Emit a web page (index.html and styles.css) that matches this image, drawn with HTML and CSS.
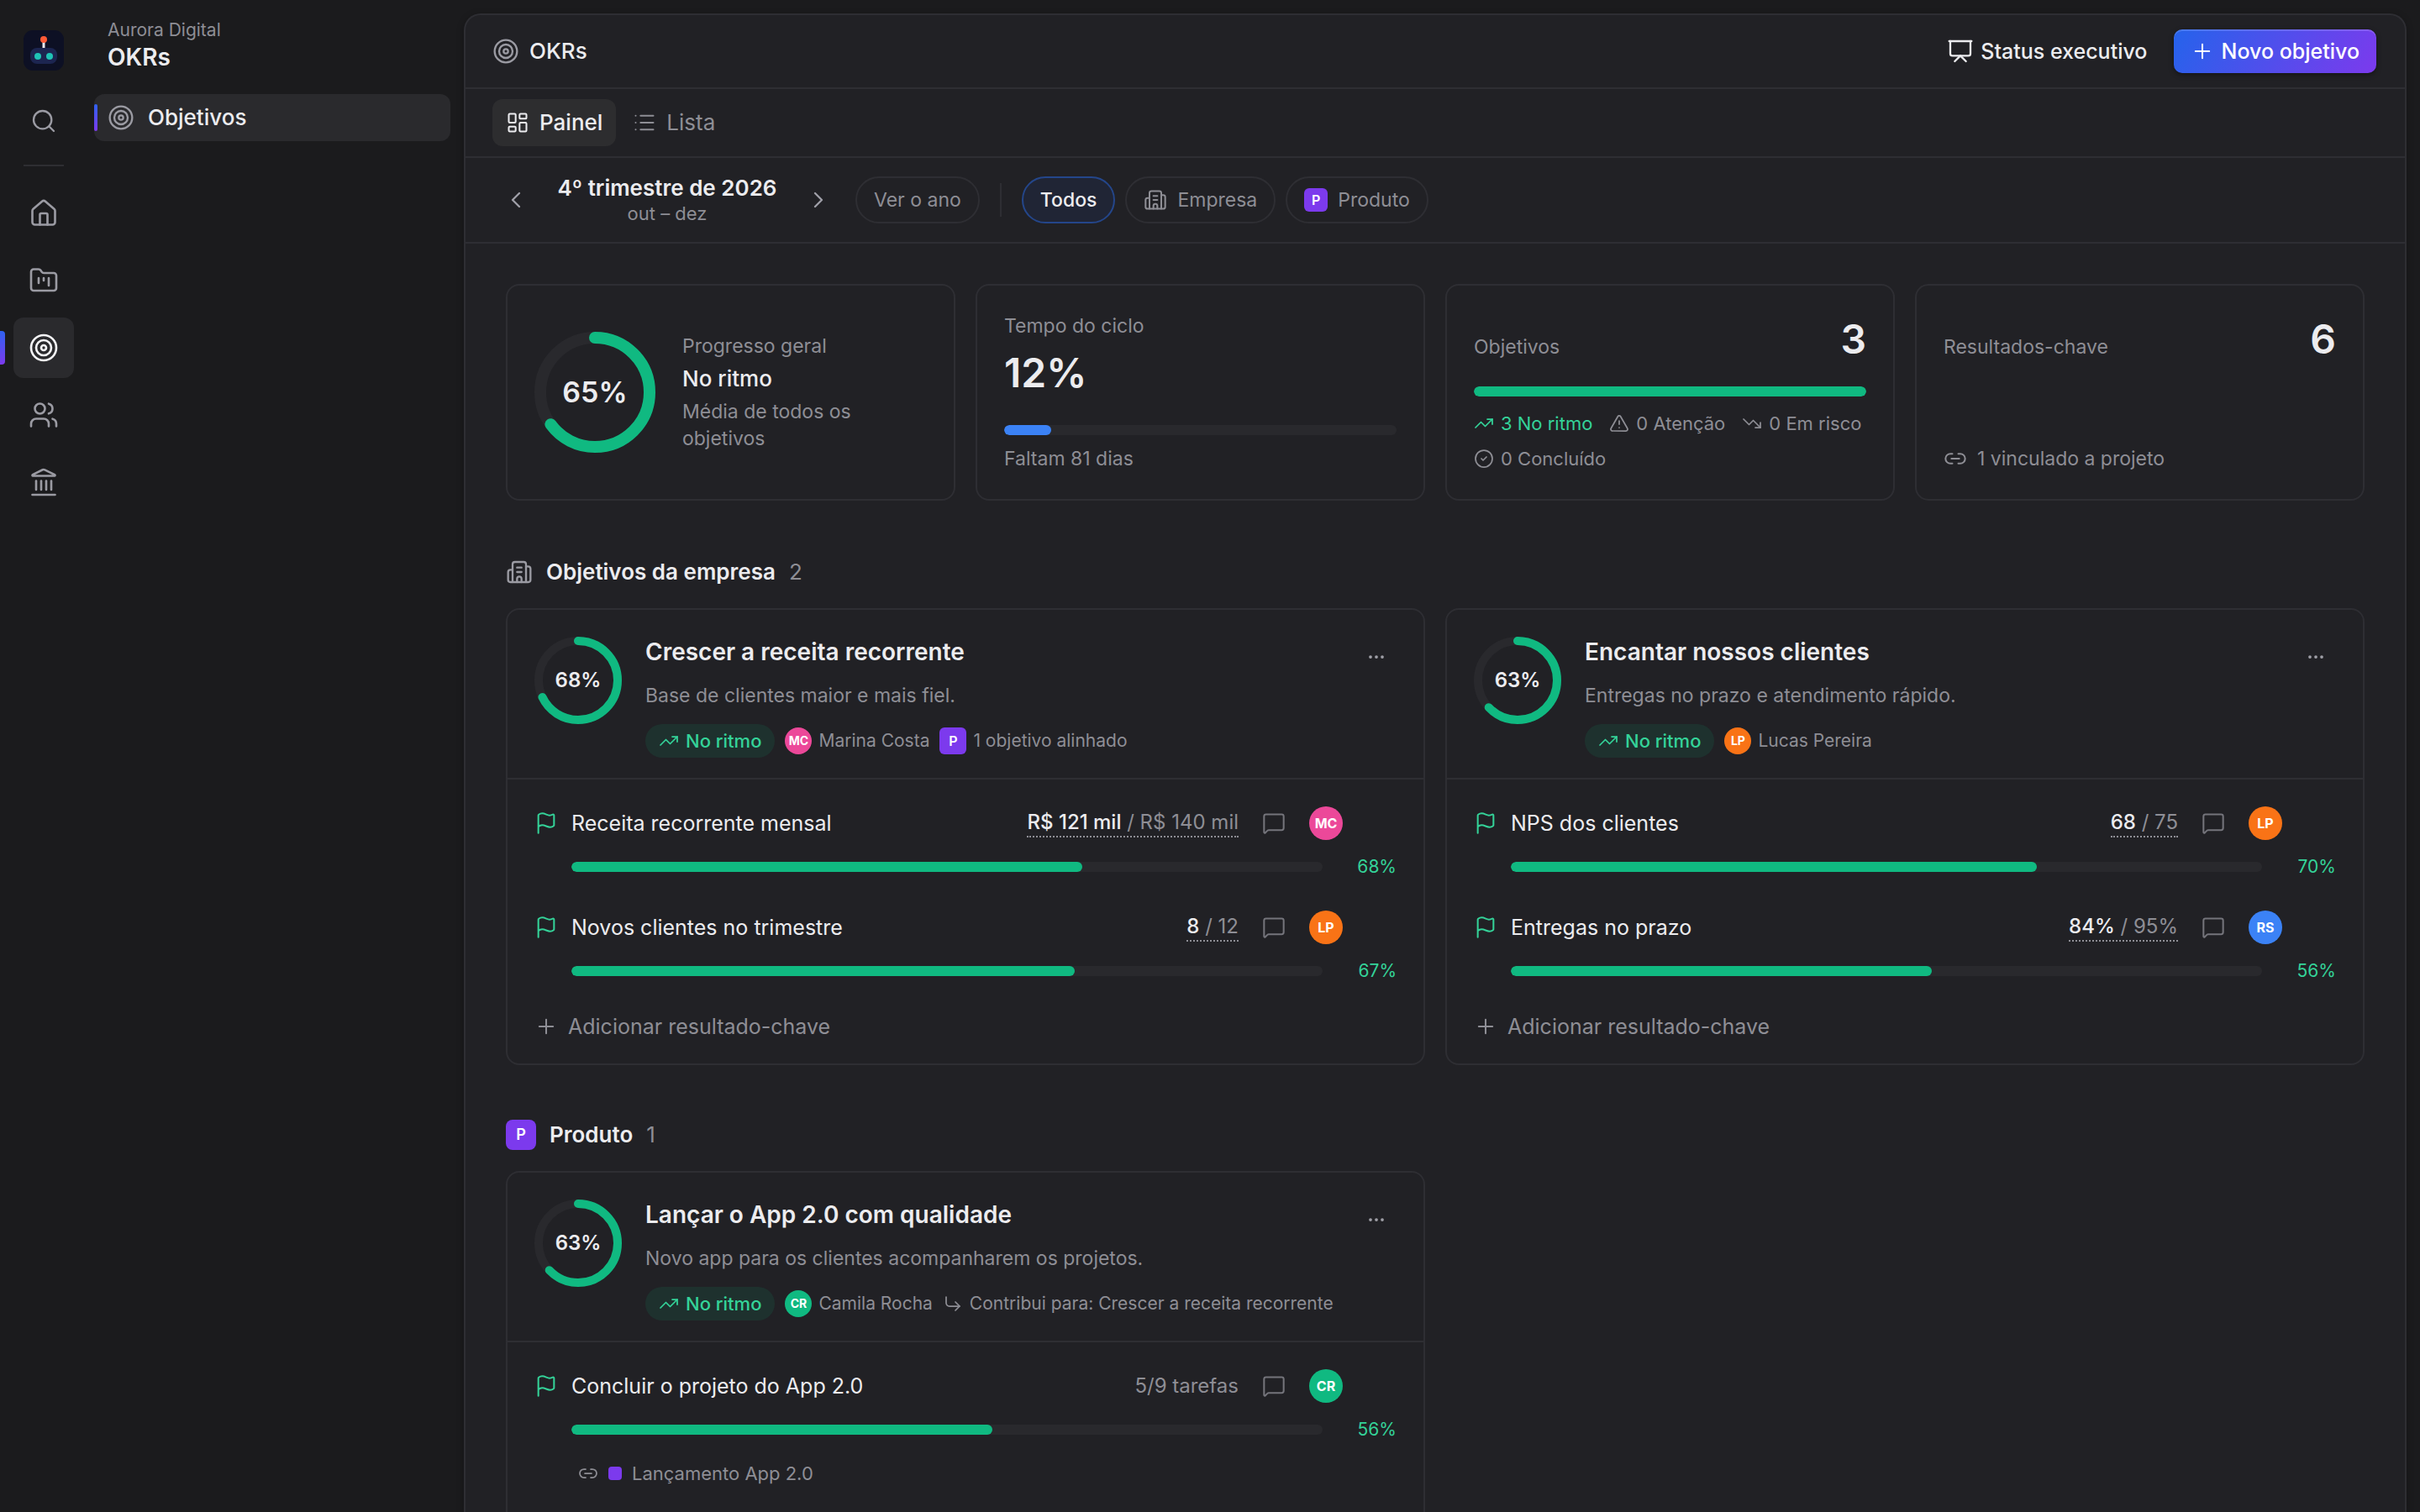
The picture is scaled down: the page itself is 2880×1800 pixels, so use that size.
FILE: index.html
```html
<!DOCTYPE html>
<html lang="pt-BR">
<head>
    <meta charset="utf-8">
    <title>OKRs</title>
    <link rel="stylesheet" href="styles.css">
</head>
<body>
    <svg class="sprite" aria-hidden="true">
        <symbol id="search" viewBox="0 0 24 24"><circle cx="11" cy="11" r="8"/><path d="m21 21-4.3-4.3"/></symbol>
        <symbol id="home" viewBox="0 0 24 24"><path d="M15 21v-8a1 1 0 0 0-1-1h-4a1 1 0 0 0-1 1v8"/><path d="M3 10a2 2 0 0 1 .709-1.528l7-5.999a2 2 0 0 1 2.582 0l7 5.999A2 2 0 0 1 21 10v9a2 2 0 0 1-2 2H5a2 2 0 0 1-2-2z"/></symbol>
        <symbol id="folder" viewBox="0 0 24 24"><path d="M4 20h16a2 2 0 0 0 2-2V8a2 2 0 0 0-2-2h-7.93a2 2 0 0 1-1.66-.9l-.82-1.2A2 2 0 0 0 7.93 3H4a2 2 0 0 0-2 2v13c0 1.1.9 2 2 2Z"/><path d="M8 10v4"/><path d="M12 10v2"/><path d="M16 10v6"/></symbol>
        <symbol id="goal" viewBox="0 0 24 24"><circle cx="12" cy="12" r="10"/><circle cx="12" cy="12" r="6"/><circle cx="12" cy="12" r="2"/></symbol>
        <symbol id="users" viewBox="0 0 24 24"><path d="M16 21v-2a4 4 0 0 0-4-4H6a4 4 0 0 0-4 4v2"/><circle cx="9" cy="7" r="4"/><path d="M22 21v-2a4 4 0 0 0-3-3.87"/><path d="M16 3.128a4 4 0 0 1 0 7.744"/></symbol>
        <symbol id="landmark" viewBox="0 0 24 24"><path d="M10 18v-7"/><path d="M11.12 2.198a2 2 0 0 1 1.76.006l7.866 3.847c.476.233.31.949-.22.949H3.474c-.53 0-.695-.716-.22-.949z"/><path d="M14 18v-7"/><path d="M18 18v-7"/><path d="M3 22h18"/><path d="M6 18v-7"/></symbol>
        <symbol id="building" viewBox="0 0 24 24"><path d="M10 12h4"/><path d="M10 8h4"/><path d="M14 21v-3a2 2 0 0 0-4 0v3"/><path d="M6 10H4a2 2 0 0 0-2 2v7a2 2 0 0 0 2 2h16a2 2 0 0 0 2-2V9a2 2 0 0 0-2-2h-2"/><path d="M6 21V5a2 2 0 0 1 2-2h8a2 2 0 0 1 2 2v16"/></symbol>
        <symbol id="presentation" viewBox="0 0 24 24"><path d="M2 3h20"/><path d="M21 3v11a2 2 0 0 1-2 2H5a2 2 0 0 1-2-2V3"/><path d="m7 21 5-5 5 5"/></symbol>
        <symbol id="plus" viewBox="0 0 24 24"><path d="M5 12h14"/><path d="M12 5v14"/></symbol>
        <symbol id="dashboard" viewBox="0 0 24 24"><rect width="7" height="9" x="3" y="3" rx="1"/><rect width="7" height="5" x="14" y="3" rx="1"/><rect width="7" height="9" x="14" y="12" rx="1"/><rect width="7" height="5" x="3" y="16" rx="1"/></symbol>
        <symbol id="list" viewBox="0 0 24 24"><path d="M3 5h.01"/><path d="M3 12h.01"/><path d="M3 19h.01"/><path d="M8 5h13"/><path d="M8 12h13"/><path d="M8 19h13"/></symbol>
        <symbol id="chevron-left" viewBox="0 0 24 24"><path d="m15 18-6-6 6-6"/></symbol>
        <symbol id="chevron-right" viewBox="0 0 24 24"><path d="m9 18 6-6-6-6"/></symbol>
        <symbol id="up" viewBox="0 0 24 24"><path d="M16 7h6v6"/><path d="m22 7-8.5 8.5-5-5L2 17"/></symbol>
        <symbol id="down" viewBox="0 0 24 24"><path d="M16 17h6v-6"/><path d="m22 17-8.5-8.5-5 5L2 7"/></symbol>
        <symbol id="alert" viewBox="0 0 24 24"><path d="m21.73 18-8-14a2 2 0 0 0-3.48 0l-8 14A2 2 0 0 0 4 21h16a2 2 0 0 0 1.73-3"/><path d="M12 9v4"/><path d="M12 17h.01"/></symbol>
        <symbol id="check" viewBox="0 0 24 24"><circle cx="12" cy="12" r="10"/><path d="m9 12 2 2 4-4"/></symbol>
        <symbol id="link" viewBox="0 0 24 24"><path d="M9 17H7A5 5 0 0 1 7 7h2"/><path d="M15 7h2a5 5 0 1 1 0 10h-2"/><path d="M8 12h8"/></symbol>
        <symbol id="flag" viewBox="0 0 24 24"><path d="M4 22V4a1 1 0 0 1 .4-.8A6 6 0 0 1 8 2c3 0 5 2 7.333 2q2 0 3.067-.8A1 1 0 0 1 20 4v10a1 1 0 0 1-.4.8A6 6 0 0 1 16 16c-3 0-5-2-8-2a6 6 0 0 0-4 1.528"/></symbol>
        <symbol id="message" viewBox="0 0 24 24"><path d="M22 17a2 2 0 0 1-2 2H6.828a2 2 0 0 0-1.414.586l-2.202 2.202A.71.71 0 0 1 2 21.286V5a2 2 0 0 1 2-2h16a2 2 0 0 1 2 2z"/></symbol>
        <symbol id="dots" viewBox="0 0 24 24"><circle cx="12" cy="12" r="1"/><circle cx="19" cy="12" r="1"/><circle cx="5" cy="12" r="1"/></symbol>
        <symbol id="corner" viewBox="0 0 24 24"><path d="m15 10 5 5-5 5"/><path d="M4 4v7a4 4 0 0 0 4 4h12"/></symbol>
    </svg>

    <div class="app">
        <nav class="rail" aria-label="Principal">
            <svg class="logo" viewBox="0 0 48 48">
                <rect width="48" height="48" rx="11" fill="#0d1024"/>
                <rect x="22.5" y="12" width="3" height="10" fill="#e8e8ee"/>
                <circle cx="24" cy="11" r="4" fill="#ff5a36"/>
                <rect x="8" y="21" width="32" height="19" rx="8" fill="#1c2550"/>
                <circle cx="17" cy="31" r="4" fill="#1fc2b5"/>
                <circle cx="31" cy="31" r="4" fill="#1fc2b5"/>
            </svg>
            <button class="rail-item rail-search" aria-label="Buscar"><svg class="icon icon-lg"><use href="#search"/></svg></button>
            <div class="rail-line"></div>
            <a class="rail-item" href="#" aria-label="Início"><svg class="icon icon-xl"><use href="#home"/></svg></a>
            <a class="rail-item" href="#" aria-label="Projetos"><svg class="icon icon-xl"><use href="#folder"/></svg></a>
            <a class="rail-item active" href="#" aria-label="OKRs"><svg class="icon icon-xl"><use href="#goal"/></svg></a>
            <a class="rail-item" href="#" aria-label="Pessoas"><svg class="icon icon-xl"><use href="#users"/></svg></a>
            <a class="rail-item" href="#" aria-label="Governança"><svg class="icon icon-xl"><use href="#landmark"/></svg></a>
        </nav>

        <aside class="sidebar">
            <div class="sidebar-head">
                <div class="company">Aurora Digital</div>
                <div class="module">OKRs</div>
            </div>
            <a class="sidebar-link" href="#"><svg class="icon icon-lg"><use href="#goal"/></svg>Objetivos</a>
        </aside>

        <main class="panel">
            <header class="topbar">
                <svg class="icon icon-lg"><use href="#goal"/></svg>
                <h1>OKRs</h1>
                <button class="btn btn-ghost"><svg class="icon icon-lg"><use href="#presentation"/></svg>Status executivo</button>
                <button class="btn btn-primary"><svg class="icon"><use href="#plus"/></svg>Novo objetivo</button>
            </header>

            <div class="tabs">
                <button class="tab active"><svg class="icon"><use href="#dashboard"/></svg>Painel</button>
                <button class="tab"><svg class="icon"><use href="#list"/></svg>Lista</button>
            </div>

            <div class="filters">
                <button class="step" aria-label="Trimestre anterior"><svg class="icon icon-lg"><use href="#chevron-left"/></svg></button>
                <div class="period">
                    <div class="period-name">4º trimestre de 2026</div>
                    <div class="period-months">out – dez</div>
                </div>
                <button class="step" aria-label="Próximo trimestre"><svg class="icon icon-lg"><use href="#chevron-right"/></svg></button>
                <button class="pill pill-year">Ver o ano</button>
                <div class="filters-line"></div>
                <div class="pills">
                    <button class="pill active">Todos</button>
                    <button class="pill"><svg class="icon"><use href="#building"/></svg>Empresa</button>
                    <button class="pill"><span class="badge badge-sm">P</span>Produto</button>
                </div>
            </div>

            <div class="content">
                <div class="kpis">
                    <div class="card kpi kpi-ring">
                        <div class="ring ring-lg">
                            <svg viewBox="0 0 144 144">
                                <circle class="ring-track" cx="72" cy="72" r="65"/>
                                <circle class="ring-fill" cx="72" cy="72" r="65" pathLength="100" stroke-dasharray="65 100"/>
                            </svg>
                            <span>65%</span>
                        </div>
                        <div class="kpi-text">
                            <div class="label">Progresso geral</div>
                            <div class="status">No ritmo</div>
                            <div class="label">Média de todos os objetivos</div>
                        </div>
                    </div>
                    <div class="card kpi">
                        <div class="label">Tempo do ciclo</div>
                        <div class="big">12%</div>
                        <div class="bar bottom"><div class="bar-fill blue" style="width: 12%"></div></div>
                        <div class="label under">Faltam 81 dias</div>
                    </div>
                    <div class="card kpi">
                        <div class="kpi-head"><span class="label">Objetivos</span><span class="big">3</span></div>
                        <div class="bar top"><div class="bar-fill" style="width: 100%"></div></div>
                        <div class="legend">
                            <span class="legend-item green"><svg class="icon icon-sm"><use href="#up"/></svg>3 No ritmo</span>
                            <span class="legend-item"><svg class="icon icon-sm"><use href="#alert"/></svg>0 Atenção</span>
                            <span class="legend-item"><svg class="icon icon-sm"><use href="#down"/></svg>0 Em risco</span>
                            <span class="legend-item"><svg class="icon icon-sm"><use href="#check"/></svg>0 Concluído</span>
                        </div>
                    </div>
                    <div class="card kpi">
                        <div class="kpi-head"><span class="label">Resultados-chave</span><span class="big">6</span></div>
                        <div class="linked bottom"><svg class="icon"><use href="#link"/></svg>1 vinculado a projeto</div>
                    </div>
                </div>

                <section class="group">
                    <div class="group-head">
                        <svg class="icon icon-lg"><use href="#building"/></svg>
                        <h2>Objetivos da empresa</h2>
                        <span class="count">2</span>
                    </div>
                    <div class="objectives">
                        <article class="card objective">
                            <div class="objective-head">
                                <div class="ring">
                                    <svg viewBox="0 0 104 104">
                                        <circle class="ring-track" cx="52" cy="52" r="47"/>
                                        <circle class="ring-fill" cx="52" cy="52" r="47" pathLength="100" stroke-dasharray="68 100"/>
                                    </svg>
                                    <span>68%</span>
                                </div>
                                <div class="objective-text">
                                    <h3>Crescer a receita recorrente</h3>
                                    <p>Base de clientes maior e mais fiel.</p>
                                    <div class="meta">
                                        <span class="chip"><svg class="icon icon-sm"><use href="#up"/></svg>No ritmo</span>
                                        <span class="meta-item"><span class="avatar avatar-sm pink">MC</span>Marina Costa</span>
                                        <span class="meta-item"><span class="badge">P</span>1 objetivo alinhado</span>
                                    </div>
                                </div>
                                <button class="more" aria-label="Mais opções"><svg class="icon icon-sm"><use href="#dots"/></svg></button>
                            </div>
                            <div class="results">
                                <div class="result">
                                    <svg class="icon green"><use href="#flag"/></svg>
                                    <div class="result-name">Receita recorrente mensal</div>
                                    <button class="value"><b>R$ 121 mil</b> / R$ 140 mil</button>
                                    <button class="comment" aria-label="Comentários"><svg class="icon"><use href="#message"/></svg></button>
                                    <span class="avatar pink">MC</span>
                                    <div class="result-progress">
                                        <div class="bar"><div class="bar-fill" style="width: 68%"></div></div>
                                        <span class="percent">68%</span>
                                    </div>
                                </div>
                                <div class="result">
                                    <svg class="icon green"><use href="#flag"/></svg>
                                    <div class="result-name">Novos clientes no trimestre</div>
                                    <button class="value"><b>8</b> / 12</button>
                                    <button class="comment" aria-label="Comentários"><svg class="icon"><use href="#message"/></svg></button>
                                    <span class="avatar orange">LP</span>
                                    <div class="result-progress">
                                        <div class="bar"><div class="bar-fill" style="width: 67%"></div></div>
                                        <span class="percent">67%</span>
                                    </div>
                                </div>
                            </div>
                            <button class="add"><svg class="icon"><use href="#plus"/></svg>Adicionar resultado-chave</button>
                        </article>

                        <article class="card objective">
                            <div class="objective-head">
                                <div class="ring">
                                    <svg viewBox="0 0 104 104">
                                        <circle class="ring-track" cx="52" cy="52" r="47"/>
                                        <circle class="ring-fill" cx="52" cy="52" r="47" pathLength="100" stroke-dasharray="63 100"/>
                                    </svg>
                                    <span>63%</span>
                                </div>
                                <div class="objective-text">
                                    <h3>Encantar nossos clientes</h3>
                                    <p>Entregas no prazo e atendimento rápido.</p>
                                    <div class="meta">
                                        <span class="chip"><svg class="icon icon-sm"><use href="#up"/></svg>No ritmo</span>
                                        <span class="meta-item"><span class="avatar avatar-sm orange">LP</span>Lucas Pereira</span>
                                    </div>
                                </div>
                                <button class="more" aria-label="Mais opções"><svg class="icon icon-sm"><use href="#dots"/></svg></button>
                            </div>
                            <div class="results">
                                <div class="result">
                                    <svg class="icon green"><use href="#flag"/></svg>
                                    <div class="result-name">NPS dos clientes</div>
                                    <button class="value"><b>68</b> / 75</button>
                                    <button class="comment" aria-label="Comentários"><svg class="icon"><use href="#message"/></svg></button>
                                    <span class="avatar orange">LP</span>
                                    <div class="result-progress">
                                        <div class="bar"><div class="bar-fill" style="width: 70%"></div></div>
                                        <span class="percent">70%</span>
                                    </div>
                                </div>
                                <div class="result">
                                    <svg class="icon green"><use href="#flag"/></svg>
                                    <div class="result-name">Entregas no prazo</div>
                                    <button class="value"><b>84%</b> / 95%</button>
                                    <button class="comment" aria-label="Comentários"><svg class="icon"><use href="#message"/></svg></button>
                                    <span class="avatar blue">RS</span>
                                    <div class="result-progress">
                                        <div class="bar"><div class="bar-fill" style="width: 56%"></div></div>
                                        <span class="percent">56%</span>
                                    </div>
                                </div>
                            </div>
                            <button class="add"><svg class="icon"><use href="#plus"/></svg>Adicionar resultado-chave</button>
                        </article>
                    </div>
                </section>

                <section class="group">
                    <div class="group-head">
                        <span class="badge badge-lg">P</span>
                        <h2>Produto</h2>
                        <span class="count">1</span>
                    </div>
                    <div class="objectives">
                        <article class="card objective">
                            <div class="objective-head">
                                <div class="ring">
                                    <svg viewBox="0 0 104 104">
                                        <circle class="ring-track" cx="52" cy="52" r="47"/>
                                        <circle class="ring-fill" cx="52" cy="52" r="47" pathLength="100" stroke-dasharray="63 100"/>
                                    </svg>
                                    <span>63%</span>
                                </div>
                                <div class="objective-text">
                                    <h3>Lançar o App 2.0 com qualidade</h3>
                                    <p>Novo app para os clientes acompanharem os projetos.</p>
                                    <div class="meta">
                                        <span class="chip"><svg class="icon icon-sm"><use href="#up"/></svg>No ritmo</span>
                                        <span class="meta-item"><span class="avatar avatar-sm teal">CR</span>Camila Rocha</span>
                                        <span class="meta-item"><svg class="icon icon-sm"><use href="#corner"/></svg>Contribui para: Crescer a receita recorrente</span>
                                    </div>
                                </div>
                                <button class="more" aria-label="Mais opções"><svg class="icon icon-sm"><use href="#dots"/></svg></button>
                            </div>
                            <div class="results">
                                <div class="result">
                                    <svg class="icon green"><use href="#flag"/></svg>
                                    <div class="result-name">Concluir o projeto do App 2.0</div>
                                    <span class="tasks">5/9 tarefas</span>
                                    <button class="comment" aria-label="Comentários"><svg class="icon"><use href="#message"/></svg></button>
                                    <span class="avatar teal">CR</span>
                                    <div class="result-progress">
                                        <div class="bar"><div class="bar-fill" style="width: 56%"></div></div>
                                        <span class="percent">56%</span>
                                    </div>
                                    <a class="project" href="#"><svg class="icon icon-sm"><use href="#link"/></svg><span class="swatch"></span>Lançamento App 2.0</a>
                                </div>
                            </div>
                            <button class="add"><svg class="icon"><use href="#plus"/></svg></button>
                        </article>
                    </div>
                </section>
            </div>
        </main>
    </div>
</body>
</html>
```
FILE: styles.css
```css
* {
    box-sizing: border-box;
}

body {
    margin: 0;
    background-color: #1b1b1d;
    color: #ececef;
    font-family: Inter, "Noto Sans", sans-serif;
    font-size: 23px;
    line-height: 32px;
}

h1, h2, h3, p {
    margin: 0;
}

button {
    padding: 0;
    border: none;
    background: none;
    color: inherit;
    font: inherit;
    cursor: pointer;
}

a {
    color: inherit;
    text-decoration: none;
}

.sprite {
    display: none;
}

.icon {
    flex: none;
    width: 28px;
    height: 28px;
    fill: none;
    stroke: currentColor;
    stroke-width: 1.75;
    stroke-linecap: round;
    stroke-linejoin: round;
}

.icon-sm {
    width: 24px;
    height: 24px;
}

.icon-lg {
    width: 32px;
    height: 32px;
}

.icon-xl {
    width: 36px;
    height: 36px;
}

.icon.green, .green {
    color: #34d399;
}

.app {
    display: flex;
    height: 100vh;
    overflow: hidden;
}

/* left rail */

.rail {
    display: flex;
    flex-direction: column;
    align-items: center;
    gap: 8px;
    width: 104px;
    padding-top: 36px;
}

.logo {
    width: 48px;
    height: 48px;
}

.rail-item {
    position: relative;
    display: flex;
    align-items: center;
    justify-content: center;
    width: 72px;
    height: 72px;
    border-radius: 12px;
    color: #9b9ba3;
}

.rail-search {
    margin-top: 16px;
}

.rail-line {
    width: 48px;
    height: 2px;
    margin: 8px 0 12px;
    background-color: #2e2e32;
}

.rail-item.active {
    background-color: #2a2a2d;
    color: #f4f4f6;
}

.rail-item.active::before {
    content: "";
    position: absolute;
    left: -16px;
    width: 6px;
    height: 40px;
    border-radius: 0 4px 4px 0;
    background: linear-gradient(#2f62f0, #7c3aed);
}

/* sidebar */

.sidebar {
    width: 448px;
    padding: 20px 16px 0 8px;
}

.sidebar-head {
    padding: 0 16px;
    margin-bottom: 28px;
}

.company {
    color: #8e8e95;
    font-size: 21px;
}

.module {
    font-size: 28px;
    font-weight: 600;
}

.sidebar-link {
    position: relative;
    display: flex;
    align-items: center;
    gap: 16px;
    height: 56px;
    padding: 0 16px;
    border-radius: 12px;
    background-color: #2a2a2d;
    font-size: 26px;
    font-weight: 500;
}

.sidebar-link::before {
    content: "";
    position: absolute;
    left: 0;
    width: 4px;
    height: 32px;
    border-radius: 2px;
    background: linear-gradient(#2f62f0, #7c3aed);
}

.sidebar-link .icon {
    color: #9b9ba3;
}

/* main panel */

.panel {
    flex: 1;
    margin: 16px 16px 0 0;
    border: 2px solid #2e2e33;
    border-bottom: none;
    border-radius: 20px 20px 0 0;
    background-color: #212125;
    box-shadow: 0 2px 8px rgba(0, 0, 0, 0.25);
    overflow: hidden;
}

.topbar {
    display: flex;
    align-items: center;
    gap: 12px;
    height: 88px;
    padding: 0 34px 0 32px;
    border-bottom: 2px solid #2e2e33;
}

.topbar > .icon {
    color: #9b9ba3;
}

.topbar h1 {
    margin-right: auto;
    font-size: 26px;
    font-weight: 500;
}

.btn {
    display: flex;
    align-items: center;
    gap: 8px;
    height: 52px;
    padding: 0 20px;
    border-radius: 10px;
    font-size: 25px;
    font-weight: 500;
}

.btn-primary {
    background: linear-gradient(120deg, #2563eb, #7c3aed);
    box-shadow: inset 0 2px 0 rgba(255, 255, 255, 0.15), 0 2px 6px rgba(0, 0, 0, 0.4);
    color: #fff;
}

.tabs {
    display: flex;
    align-items: center;
    gap: 4px;
    height: 82px;
    padding: 0 32px;
    border-bottom: 2px solid #2e2e33;
}

.tab {
    display: flex;
    align-items: center;
    gap: 12px;
    height: 56px;
    padding: 0 16px;
    border-radius: 12px;
    color: #8e8e95;
    font-size: 26px;
}

.tab.active {
    background-color: #2d2d2f;
    color: #ececef;
    font-weight: 500;
}

.filters {
    display: flex;
    align-items: center;
    height: 102px;
    padding: 0 32px;
    border-bottom: 2px solid #2e2e33;
}

.step {
    display: flex;
    align-items: center;
    justify-content: center;
    width: 56px;
    height: 56px;
    color: #a0a0a8;
}

.period {
    min-width: 304px;
    text-align: center;
}

.period-name {
    font-size: 26px;
    font-weight: 600;
}

.period-months {
    color: #8e8e95;
    font-size: 22px;
    line-height: 28px;
}

.filters-line {
    width: 2px;
    height: 40px;
    margin: 0 24px;
    background-color: #2e2e33;
}

.pills {
    display: flex;
    gap: 12px;
}

.pill {
    display: flex;
    align-items: center;
    gap: 12px;
    height: 56px;
    padding: 0 20px;
    border: 2px solid #2e2e33;
    border-radius: 28px;
    color: #8e8e95;
}

.pill-year {
    margin-left: 16px;
}

.pill.active {
    border-color: #24468a;
    background-color: #202535;
    color: #ececef;
    font-weight: 500;
}

.badge {
    display: flex;
    align-items: center;
    justify-content: center;
    width: 32px;
    height: 32px;
    border-radius: 6px;
    background-color: #7c3aed;
    color: #fff;
    font-size: 16px;
    font-weight: 600;
}

.badge-sm {
    width: 28px;
    height: 28px;
}

.badge-lg {
    width: 36px;
    height: 36px;
    border-radius: 8px;
    font-size: 18px;
}

.content {
    padding: 48px;
}

.card {
    border: 2px solid #2e2e33;
    border-radius: 16px;
}

/* summary cards */

.kpis {
    display: grid;
    grid-template-columns: repeat(4, 1fr);
    gap: 24px;
    margin-bottom: 66px;
}

.kpi {
    display: flex;
    flex-direction: column;
    min-height: 258px;
    padding: 32px;
}

.kpi-ring {
    flex-direction: row;
    align-items: center;
    gap: 32px;
}

.ring {
    position: relative;
    flex: none;
    display: flex;
    align-items: center;
    justify-content: center;
    width: 104px;
    height: 104px;
    font-size: 24px;
    font-weight: 600;
}

.ring svg {
    position: absolute;
    inset: 0;
    transform: rotate(-90deg);
}

.ring circle {
    fill: none;
    stroke-width: 10;
}

.ring-lg {
    width: 144px;
    height: 144px;
    font-size: 34px;
}

.ring-lg circle {
    stroke-width: 14;
}

.ring-track {
    stroke: #29292d;
}

.ring-fill {
    stroke: #10b981;
    stroke-linecap: round;
}

.label {
    color: #8e8e95;
}

.status {
    margin: 7px 0;
    font-size: 26px;
    font-weight: 500;
}

.big {
    font-size: 48px;
    font-weight: 600;
    line-height: 64px;
}

.kpi > .big {
    margin-top: 8px;
}

.kpi-head {
    display: flex;
    align-items: baseline;
    justify-content: space-between;
}

.bottom {
    margin-top: auto;
}

.bar.top {
    margin: 24px 0 16px;
}

.under {
    margin-top: 12px;
}

.bar {
    height: 12px;
    border-radius: 6px;
    background-color: #29292d;
    overflow: hidden;
}

.bar-fill {
    height: 100%;
    border-radius: 6px;
    background-color: #10b981;
}

.blue {
    background-color: #3b82f6;
}

.legend {
    display: flex;
    flex-wrap: wrap;
    gap: 10px 20px;
    color: #8e8e95;
    font-size: 22px;
}

.legend-item {
    display: flex;
    align-items: center;
    gap: 8px;
}

.legend-item.green {
    color: #34d399;
}

.linked {
    display: flex;
    align-items: center;
    gap: 12px;
    color: #8e8e95;
}

/* objective groups */

.group {
    margin-bottom: 64px;
}

.group-head {
    display: flex;
    align-items: center;
    gap: 16px;
    height: 38px;
    margin-bottom: 24px;
    font-size: 26px;
}

.group-head .icon {
    color: #9b9ba3;
}

.group-head h2 {
    font-size: 26px;
    font-weight: 600;
}

.count {
    color: #8e8e95;
}

.objectives {
    display: grid;
    grid-template-columns: repeat(2, 1fr);
    gap: 24px;
}

.objective-head {
    display: flex;
    padding: 32px 32px 24px;
    border-bottom: 2px solid #2e2e33;
}

.objective-text {
    flex: 1;
    margin-left: 28px;
}

.objective-text h3 {
    font-size: 28px;
    font-weight: 600;
    line-height: 36px;
}

.objective-text p {
    margin: 18px 0;
    color: #8e8e95;
}

.meta {
    display: flex;
    align-items: center;
    gap: 12px;
    color: #8e8e95;
    font-size: 21px;
    white-space: nowrap;
}

.meta-item {
    display: flex;
    align-items: center;
    gap: 8px;
}

.chip {
    display: flex;
    align-items: center;
    gap: 8px;
    height: 40px;
    padding: 0 16px;
    border-radius: 20px;
    background-color: #1e312e;
    color: #34d399;
    font-size: 22px;
    font-weight: 500;
}

.avatar {
    display: flex;
    align-items: center;
    justify-content: center;
    width: 40px;
    height: 40px;
    border-radius: 50%;
    color: #fff;
    font-size: 16px;
    font-weight: 700;
}

.avatar-sm {
    width: 32px;
    height: 32px;
    font-size: 14px;
}

.pink {
    background-color: #ec4899;
}

.orange {
    background-color: #f97316;
}

.teal {
    background-color: #10b981;
}

.more {
    display: flex;
    align-items: center;
    justify-content: center;
    width: 48px;
    height: 48px;
    color: #a0a0a8;
}

.results {
    display: flex;
    flex-direction: column;
    gap: 36px;
    padding: 32px 32px 0;
}

.result {
    display: grid;
    grid-template-columns: 28px 1fr auto 52px 40px 48px;
    column-gap: 16px;
    align-items: center;
}

.result-name {
    font-size: 25px;
    line-height: 40px;
}

.value, .tasks {
    color: #8e8e95;
    font-size: 24px;
}

.value {
    border-bottom: 2px dotted #8e8e95;
}

.value b {
    color: #ececef;
    font-weight: 500;
}

.comment {
    display: flex;
    justify-content: center;
    color: #74747b;
}

.result-progress {
    grid-column: 2 / -1;
    display: grid;
    grid-template-columns: 1fr 72px;
    gap: 16px;
    align-items: center;
    margin-top: 16px;
}

.percent {
    color: #34d399;
    font-size: 21px;
    text-align: right;
}

.project {
    grid-column: 2 / -1;
    display: flex;
    align-items: center;
    gap: 12px;
    margin-top: 20px;
    padding-left: 8px;
    color: #8e8e95;
    font-size: 22px;
}

.swatch {
    width: 16px;
    height: 16px;
    border-radius: 4px;
    background-color: #7c3aed;
}

.add {
    display: flex;
    align-items: center;
    gap: 12px;
    height: 52px;
    margin: 24px 32px 18px;
    color: #8e8e95;
    font-size: 25px;
}
```
